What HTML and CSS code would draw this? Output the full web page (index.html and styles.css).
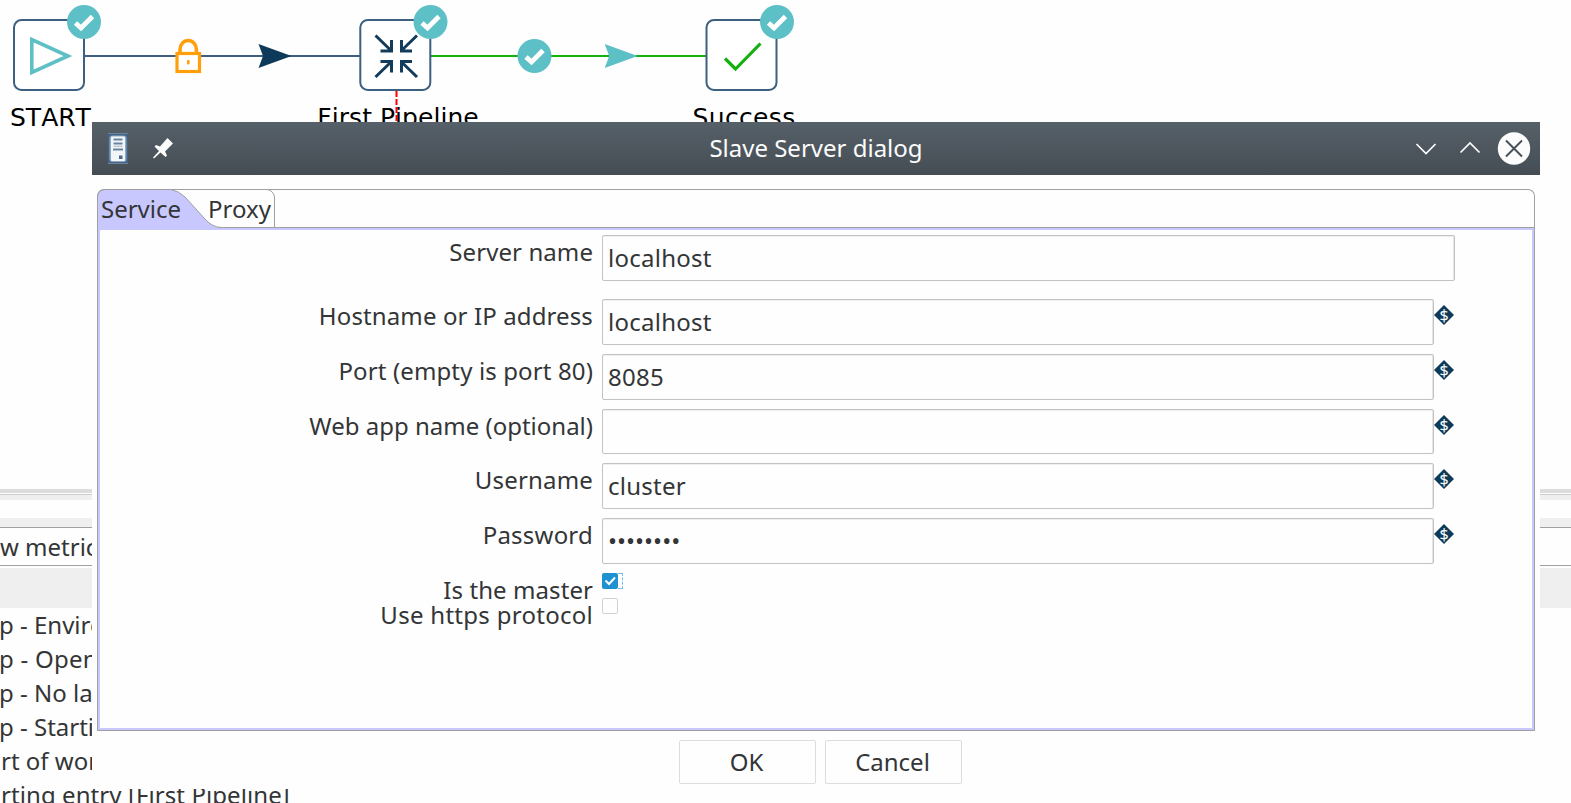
FILE: index.html
```html
<!DOCTYPE html>
<html lang="en">
<head>
<meta charset="utf-8">
<title>Slave Server dialog</title>
<link rel="stylesheet" href="styles.css">
</head>
<body>
<div class="workspace">
  <svg class="canvas" width="1571" height="489" viewBox="0 0 1571 489">
    <defs>
      <g id="badge">
        <circle r="17" fill="#5dc0c6"/>
        <path d="M-8.500 1L-3 6L8.500 -5.500" fill="none" stroke="#fff" stroke-width="4.800"/>
      </g>
      <rect id="node" x="-35" y="-35" width="70" height="70" rx="7.500" fill="#fff" stroke="#3d6080" stroke-width="2"/>
      <path id="arrow" d="M-16.500 -12L16.500 0L-16.500 12L-12 0Z"/>
    </defs>
    <path d="M84 56H360" stroke="#3d6080" stroke-width="2"/>
    <path d="M431 56H706" stroke="#14b10e" stroke-width="2"/>
    <use href="#node" x="49" y="55"/>
    <use href="#node" x="395.300" y="55"/>
    <use href="#node" x="741.500" y="55"/>
    <path d="M31.800 39.500V72.500L68 56Z" fill="none" stroke="#5dc0c6" stroke-width="3.600"/>
    <g fill="none" stroke="#133c5c" stroke-width="3">
      <path d="M375.500 35.500L391 50.500M380.500 51H391.500V40"/>
      <path d="M417 35.500L401.500 50.500M412 51H401.500V40"/>
      <path d="M375.500 77L391 62M380.500 61.500H391.500V72.500"/>
      <path d="M417 77L401.500 62M412 61.500H401.500V72.500"/>
    </g>
    <path d="M725 58.500L735.500 69L760.500 43.500" fill="none" stroke="#14b10e" stroke-width="3.200"/>
    <use href="#badge" x="84" y="22"/>
    <use href="#badge" x="430.500" y="22"/>
    <use href="#badge" x="777" y="22"/>
    <use href="#badge" x="534.500" y="56"/>
    <use href="#arrow" x="275" y="56" fill="#0e3a5a"/>
    <use href="#arrow" x="621.200" y="56" fill="#5dc0c6"/>
    <rect x="177" y="53.500" width="22.500" height="18" fill="#fff" stroke="#ff9f0a" stroke-width="3.200"/>
    <path d="M180 53V49.500A8.200 9 0 0 1 196.400 49.500V53" fill="none" stroke="#ff9f0a" stroke-width="3.600"/>
    <rect x="187" y="60" width="2.600" height="4.500" rx="1" fill="#ff9f0a"/>
    <path d="M396.500 91V130" stroke="#f00" stroke-width="2" stroke-dasharray="6 2"/>
    <g class="node-name">
      <text x="10" y="126">START</text>
      <text x="317.300" y="126" class="spaced">First Pipeline</text>
      <text x="692.500" y="126" class="spaced-more">Success</text>
    </g>
  </svg>
  <div class="sash"></div>
  <div class="toolbar-edge"></div>
  <div class="metrics-bar">w metrics</div>
  <div class="log-head"></div>
  <div class="log">
    <div class="log-line inset">p - Environment</div>
    <div class="log-line inset open">p - Opening</div>
    <div class="log-line inset">p - No last</div>
    <div class="log-line inset">p - Starting</div>
    <div class="log-line">rt of workflow</div>
    <div class="log-line entry">rting entry [First Pipeline]</div>
  </div>
</div>

<div class="dialog">
  <div class="titlebar">
    <svg class="title-icons" width="66" height="34" viewBox="0 0 66 34">
      <rect x="1" y="1" width="20" height="31" fill="#426587"/>
      <path d="M1 1.500H21M1 31.500H21" stroke="#6c8296"/>
      <rect x="2.500" y="3.500" width="17" height="26.500" rx="3" fill="#8fa9c0"/>
      <rect x="4" y="4.500" width="14" height="24.500" rx="1" fill="#f3f6f8"/>
      <path d="M6.500 7.500H15.500M6.500 11.500H15.500M6 17.500H16" stroke="#6683a0" stroke-width="2"/>
      <path d="M6.500 14.200H15.500" stroke="#9fb1c3"/>
      <rect x="12" y="23.500" width="3.500" height="3.500" fill="#4a6b8b"/>
      <path d="M60.500 6L66 11.500L58 19.500L60 23.500L58.500 25L53.500 20.500L47 26.500L46 25.500L52 19L47.500 14.500L49 13L53 14.500Z" fill="#fcfcfc"/>
    </svg>
    <div class="title">Slave Server dialog</div>
    <svg class="window-buttons" width="120" height="34" viewBox="0 0 120 34">
      <g fill="none" stroke="#fcfcfc" stroke-width="1.700">
        <path d="M4.500 12L14 21.500L23.500 12M48.500 20.500L58 11L67.500 20.500"/>
      </g>
      <circle cx="102" cy="16.500" r="16.200" fill="#fcfcfc"/>
      <path d="M94 8.500L110 24.500M110 8.500L94 24.500" stroke="#475057" stroke-width="1.900"/>
    </svg>
  </div>
  <div class="tabs">
    <div class="tab-strip">
      <svg class="tab-shape" width="180" height="40" viewBox="0 0 180 40">
        <path d="M0 40V7L2 3L7 .5H74Q82 2 88 8L108 30Q115 37 122 38.500V40Z" fill="#c8c8ff"/>
        <path d="M.5 40V8Q1 1 8 .5H74Q82 2 88 8L108 30Q115 38 124 38.500H180M74 .5H170Q176.500 1.500 177.500 8V38" fill="none" stroke="#a0a0a0"/>
      </svg>
      <span class="tab active">Service</span>
      <span class="tab">Proxy</span>
    </div>
    <div class="panel">
      <div class="row first"><label class="server">Server name</label><div class="field wide">localhost</div></div>
      <div class="row"><label class="host">Hostname or IP address</label><div class="field">localhost</div><svg class="variable" viewBox="0 0 20 20"><path d="M10 0L20 10L10 20L0 10Z"/><text x="10" y="15.500">$</text></svg></div>
      <div class="row"><label class="port">Port (empty is port 80)</label><div class="field">8085</div><svg class="variable" viewBox="0 0 20 20"><path d="M10 0L20 10L10 20L0 10Z"/><text x="10" y="15.500">$</text></svg></div>
      <div class="row short"><label>Web app name (optional)</label><div class="field"></div><svg class="variable" viewBox="0 0 20 20"><path d="M10 0L20 10L10 20L0 10Z"/><text x="10" y="15.500">$</text></svg></div>
      <div class="row"><label class="user">Username</label><div class="field">cluster</div><svg class="variable" viewBox="0 0 20 20"><path d="M10 0L20 10L10 20L0 10Z"/><text x="10" y="15.500">$</text></svg></div>
      <div class="row"><label class="pass">Password</label><div class="field secret">••••••••</div><svg class="variable" viewBox="0 0 20 20"><path d="M10 0L20 10L10 20L0 10Z"/><text x="10" y="15.500">$</text></svg></div>
      <div class="row check-row"><label class="server">Is the master</label><span class="check checked"><svg width="16" height="16" viewBox="0 0 16 16"><path d="M3.500 7.500L7 11L13 4.500" fill="none" stroke="#fff" stroke-width="2"/></svg></span><span class="focus"></span></div>
      <div class="row check-row"><label class="https">Use https protocol</label><span class="check"></span></div>
    </div>
  </div>
  <div class="actions">
    <div class="button">OK</div>
    <div class="button">Cancel</div>
  </div>
</div>
</body>
</html>
```
FILE: styles.css
```css
* { box-sizing: border-box; }
body {
  margin: 0;
  position: relative;
  width: 1571px;
  height: 803px;
  overflow: hidden;
  background: #fefefe;
  color: #333537;
  font: 24px/34px "Noto Sans", sans-serif;
}
.workspace { height: 803px; overflow: hidden; white-space: nowrap; }
.canvas { display: block; }
.node-name { font: 25px "DejaVu Sans", sans-serif; font-kerning: none; fill: #000; }
.spaced { letter-spacing: 0.05px; }
.spaced-more { letter-spacing: 0.35px; }
.sash {
  height: 11px;
  border-top: 4px solid #dcdcdc;
  background: linear-gradient(#fefefe 1px, #ccc 1px 2px, #efefef 2px);
}
.toolbar-edge { height: 9px; margin-top: 18px; background: #efefef; }
.metrics-bar {
  height: 39px;
  padding-top: 2px;
  border-top: 1px solid #a0a0a0;
  border-bottom: 1px solid #a0a0a0;
}
.log-head { height: 40px; margin-top: 2px; background: #efefef; }
.log-line { padding-left: 1px; }
.log-line.inset { margin-left: -2px; }
.log-line.open { letter-spacing: 0.25px; }
.log-line.entry { letter-spacing: 0.08px; }

.dialog {
  position: absolute;
  left: 92px;
  top: 122px;
  width: 1448px;
  height: 667px;
  background: #fefefe;
  display: flex;
  flex-direction: column;
}
.titlebar {
  height: 53px;
  flex: none;
  display: flex;
  align-items: center;
  justify-content: space-between;
  padding: 0 8px 0 15px;
  background: linear-gradient(#566068, #454d54);
  color: #fcfcfc;
}
.title { padding: 0 0 2px 47px; }
.tabs { margin: 14px 5px 0; height: 542px; }
.tab-strip {
  position: relative;
  height: 38px;
  display: flex;
  gap: 27px;
  padding: 2px 0 0 3px;
  border: 1px solid #a0a0a0;
  border-bottom: 0;
  border-radius: 7px 7px 0 0;
}
.tab-shape { position: absolute; left: -1px; top: -1px; }
.tab { position: relative; }
.panel {
  height: 504px;
  border: 1px solid #a0a0a0;
  box-shadow: inset 0 0 0 2px #c8c8ff;
  padding-top: 7px;
}
.row { display: flex; height: 55px; }
.row.first { height: 64px; }
.row.short { height: 54px; }
.row.short .field { height: 45px; }
.row.check-row { height: 25px; }
label { width: 495px; flex: none; margin-right: 9px; text-align: right; }
.server { letter-spacing: 0.08px; }
.host { letter-spacing: 0.12px; }
.port { letter-spacing: 0.13px; }
.user { letter-spacing: 0.18px; }
.pass { letter-spacing: 0.22px; }
.https { letter-spacing: 0.28px; }
.field {
  width: 832px;
  height: 46px;
  padding: 5px 5px 0;
  border: 1px solid #c3c3c3;
  border-radius: 2px;
  box-shadow: inset 0 1px #efefef, inset -1px 0 #e6e6e6;
  letter-spacing: 0.25px;
}
.field.wide { width: 853px; }
.field.secret { letter-spacing: 0; }
.variable { width: 20px; height: 20px; margin-top: 6px; }
.variable path { fill: #0e3a5a; }
.variable text { font: 16px "Noto Sans", sans-serif; fill: #fff; text-anchor: middle; }
.check { width: 16px; height: 16px; border: 1px solid #d2d2d2; border-radius: 2px; }
.check.checked { border: 0; background: #1e92d0; }
.check svg { display: block; }
.focus { width: 5px; height: 16px; border: 1px dashed #7abfe6; border-left: 0; }
.actions { display: flex; justify-content: center; gap: 9px; margin-top: 9px; padding-left: 9px; }
.button {
  width: 137px;
  height: 44px;
  padding: 4px 2px 0 0;
  border: 1px solid #ddd;
  border-radius: 2px;
  text-align: center;
}
```
